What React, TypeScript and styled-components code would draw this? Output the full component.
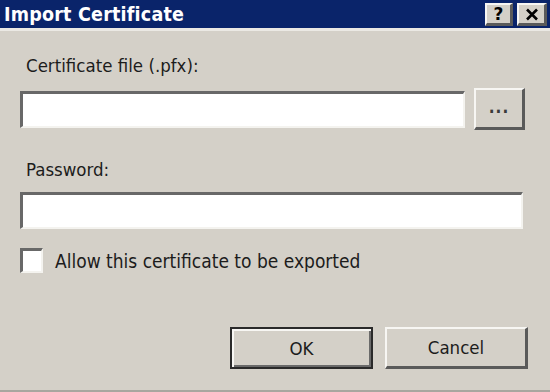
import React from 'react'
import styled, { createGlobalStyle, css } from 'styled-components'

const GlobalStyle = createGlobalStyle`
  html, body {
    margin: 0;
    padding: 0;
    background: #d4d0c8;
  }
`

const raised = css`
  border-style: solid;
  border-width: 2px 3px 3px 2px;
  border-color: #f7f6f3 #5a5a5a #5a5a5a #f7f6f3;
  background: #d4d0c8;
  box-sizing: border-box;
`

const sunken = css`
  border-style: solid;
  border-width: 3px 2px 2px 3px;
  border-color: #686868 #f4f3ef #f4f3ef #686868;
  background: #fff;
  box-sizing: border-box;
`

const Window = styled.div`
  width: 550px;
  height: 392px;
  box-sizing: border-box;
  background: #d4d0c8;
  border-bottom: 2px solid #a9a69f;
  display: flex;
  flex-direction: column;
  font-family: 'DejaVu Sans Condensed', 'DejaVu Sans', sans-serif;
  font-size: 18.5px;
  color: #1c1c1c;
`

const TitleBar = styled.div`
  height: 28px;
  background: #0a246a;
  border-bottom: 3px solid #ebe9e4;
  display: flex;
  align-items: center;
  justify-content: space-between;
  padding: 0 3px 0 4px;
`

const Title = styled.span`
  color: #fff;
  font-weight: bold;
  font-size: 19.5px;
  letter-spacing: 0.2px;
`

const Controls = styled.div`
  display: flex;
  gap: 4px;
  margin-top: 1px;
`

const ControlButton = styled.div<{ $w: number }>`
  ${raised};
  width: ${(p) => p.$w}px;
  height: 23px;
  display: flex;
  align-items: center;
  justify-content: center;
  font-family: 'DejaVu Sans', sans-serif;
  font-weight: bold;
  font-size: 17px;
  color: #000;
`

const Form = styled.div`
  flex: 1;
  display: flex;
  flex-direction: column;
  padding: 24px 25px 0 20px;
`

const Label = styled.div<{ $top: number }>`
  line-height: 21px;
  padding-left: 6px;
  margin-top: ${(p) => p.$top}px;
`

const FieldRow = styled.div<{ $top: number }>`
  display: flex;
  align-items: center;
  gap: 9px;
  margin-top: ${(p) => p.$top}px;
`

const TextBox = styled.div<{ $trim?: number }>`
  ${sunken};
  flex: 1;
  height: 37px;
  margin-right: ${(p) => p.$trim ?? 0}px;
`

const BrowseButton = styled.div`
  ${raised};
  width: 51px;
  height: 42px;
  display: flex;
  align-items: center;
  justify-content: center;
  padding-bottom: 4px;
  letter-spacing: 1px;
  font-size: 17px;
  font-weight: bold;
  color: #3a3a3a;
`

const CheckRow = styled.label`
  display: flex;
  align-items: center;
  gap: 12px;
  margin-top: 19px;
  font-size: 19px;
`

const CheckBox = styled.span`
  ${sunken};
  width: 23px;
  height: 25px;
`

const Footer = styled.div`
  display: flex;
  justify-content: flex-end;
  gap: 12px;
  margin-top: 54px;
  margin-right: -3px;
`

const PushButton = styled.div<{ $default?: boolean }>`
  ${raised};
  width: 143px;
  height: 42px;
  display: flex;
  align-items: center;
  justify-content: center;
  ${(p) =>
    p.$default &&
    css`
      border-width: 2px;
      border-color: #2a2a2a;
      box-shadow: inset 2px 2px 0 #f7f6f3, inset -2px -2px 0 #6a6a6a;
    `}
`

const CloseGlyph = () => (
  <svg width="14" height="13" viewBox="0 0 14 13">
    <path d="M2 1.5 L12 11.5 M12 1.5 L2 11.5" stroke="#000" strokeWidth="2.6" />
  </svg>
)

export default function App() {
  return (
    <>
      <GlobalStyle />
      <Window>
        <TitleBar>
          <Title>Import Certificate</Title>
          <Controls>
            <ControlButton $w={28}>?</ControlButton>
            <ControlButton $w={30}>
              <CloseGlyph />
            </ControlButton>
          </Controls>
        </TitleBar>
        <Form>
          <Label $top={0}>Certificate file (.pfx):</Label>
          <FieldRow $top={12}>
            <TextBox />
            <BrowseButton>...</BrowseButton>
          </FieldRow>
          <Label $top={29}>Password:</Label>
          <FieldRow $top={12}>
            <TextBox $trim={2} />
          </FieldRow>
          <CheckRow>
            <CheckBox />
            Allow this certificate to be exported
          </CheckRow>
          <Footer>
            <PushButton $default>OK</PushButton>
            <PushButton>Cancel</PushButton>
          </Footer>
        </Form>
      </Window>
    </>
  )
}
